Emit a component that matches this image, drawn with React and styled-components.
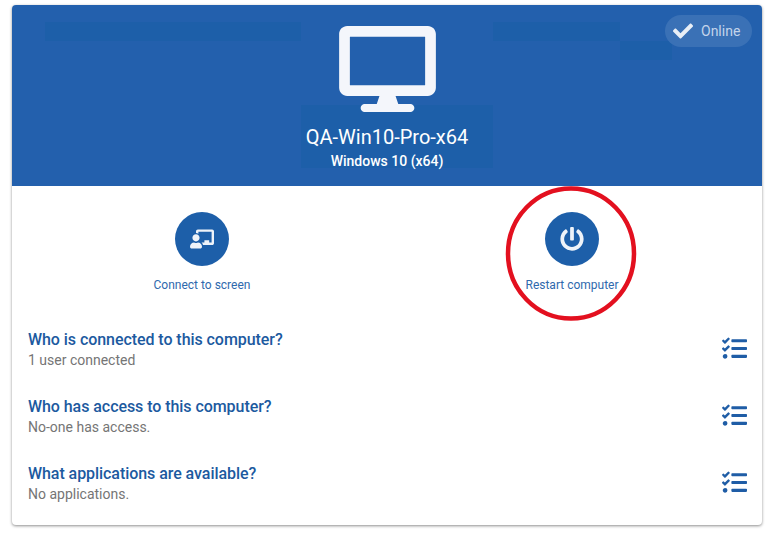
import styled, { createGlobalStyle } from 'styled-components';
import { FaChalkboardTeacher, FaCheck, FaDesktop, FaPowerOff, FaTasks } from 'react-icons/fa';

const GlobalStyle = createGlobalStyle`
  body {
    margin: 0;
    background: #fff;
    font-family: Roboto, "Liberation Sans", sans-serif;
  }
`;

const Page = styled.div`
  padding: 5px 16px 9px 12px;
`;

const Card = styled.div`
  position: relative;
  width: 750px;
  height: 520px;
  display: flex;
  flex-direction: column;
  border-radius: 4px;
  background: #fff;
  box-shadow: 0 1px 3px rgba(0, 0, 0, 0.45);
  overflow: hidden;
`;

const Header = styled.div`
  position: relative;
  height: 181px;
  display: flex;
  flex-direction: column;
  align-items: center;
  padding-top: 21px;
  box-sizing: border-box;
  color: #fff;
  background-color: #2360ad;
  background-image:
    linear-gradient(#1d5fa9, #1d5fa9),
    linear-gradient(#1d5fa9, #1d5fa9),
    linear-gradient(#1d5fa9, #1d5fa9),
    linear-gradient(#1d5fa9, #1d5fa9);
  background-repeat: no-repeat;
  background-size: 256px 19px, 127px 19px, 52px 19px, 192px 63px;
  background-position: 33px 17px, 481px 17px, 608px 36px, 289px 100px;
`;

const Monitor = styled(FaDesktop)`
  width: 97px;
  height: 86px;
  color: #f4f6fb;
`;

const Name = styled.div`
  margin-top: 13px;
  font-size: 20px;
  font-weight: 400;
  line-height: 24px;
`;

const Os = styled.div`
  margin-top: 2px;
  font-size: 14px;
  font-weight: 500;
  line-height: 20px;
`;

const StatusChip = styled.div`
  position: absolute;
  top: 10px;
  right: 10px;
  height: 32px;
  width: 87px;
  display: flex;
  align-items: center;
  gap: 8px;
  padding-left: 8px;
  box-sizing: border-box;
  border-radius: 16px;
  background: #3a71b6;
  color: #c3d4ea;
  font-size: 14px;
  svg {
    width: 20px;
    height: 20px;
    color: #e8eef6;
  }
`;

const Actions = styled.div`
  display: grid;
  grid-template-columns: 1fr 1fr;
  padding: 26px 5px 0 5px;
`;

const Action = styled.div`
  display: flex;
  flex-direction: column;
  align-items: center;
  gap: 11px;
  color: #2f69ad;
  font-size: 12px;
  line-height: 16px;
`;

const ActionButton = styled.div`
  width: 54px;
  height: 54px;
  border-radius: 50%;
  background: #1d5fa9;
  color: #eef3f9;
  display: flex;
  align-items: center;
  justify-content: center;
`;

const QuestionList = styled.div`
  display: flex;
  flex-direction: column;
  gap: 25px;
  padding: 36px 15px 0 16px;
`;

const Question = styled.div`
  display: flex;
  align-items: center;
  justify-content: space-between;
`;

const QuestionTitle = styled.div`
  font-size: 16px;
  font-weight: 500;
  line-height: 21px;
  letter-spacing: -0.06px;
  color: #1c5a9f;
`;

const QuestionSub = styled.div`
  font-size: 14px;
  line-height: 21px;
  color: #757575;
`;

const ListIcon = styled(FaTasks)`
  width: 25px;
  height: 25px;
  margin-bottom: 3px;
  color: #1f5da6;
`;

const Annotation = styled.svg`
  position: absolute;
  left: 493px;
  top: 181px;
  pointer-events: none;
`;

const questions = [
  { title: 'Who is connected to this computer?', sub: '1 user connected' },
  { title: 'Who has access to this computer?', sub: 'No-one has access.' },
  { title: 'What applications are available?', sub: 'No applications.' },
];

const App = () => (
  <Page>
    <GlobalStyle />
    <Card>
      <Header>
        <Monitor />
        <Name>QA-Win10-Pro-x64</Name>
        <Os>Windows 10 (x64)</Os>
        <StatusChip>
          <FaCheck />
          Online
        </StatusChip>
      </Header>
      <Actions>
        <Action>
          <ActionButton>
            <FaChalkboardTeacher size={24} />
          </ActionButton>
          Connect to screen
        </Action>
        <Action>
          <ActionButton>
            <FaPowerOff size={24} />
          </ActionButton>
          Restart computer
        </Action>
      </Actions>
      <QuestionList>
        {questions.map(item => (
          <Question key={item.title}>
            <div>
              <QuestionTitle>{item.title}</QuestionTitle>
              <QuestionSub>{item.sub}</QuestionSub>
            </div>
            <ListIcon />
          </Question>
        ))}
      </QuestionList>
      <Annotation width="132" height="140" viewBox="0 0 132 140">
        <ellipse cx="66" cy="67.5" rx="63" ry="65" fill="none" stroke="#e3101f" strokeWidth="4.5" />
      </Annotation>
    </Card>
  </Page>
);

export default App;
